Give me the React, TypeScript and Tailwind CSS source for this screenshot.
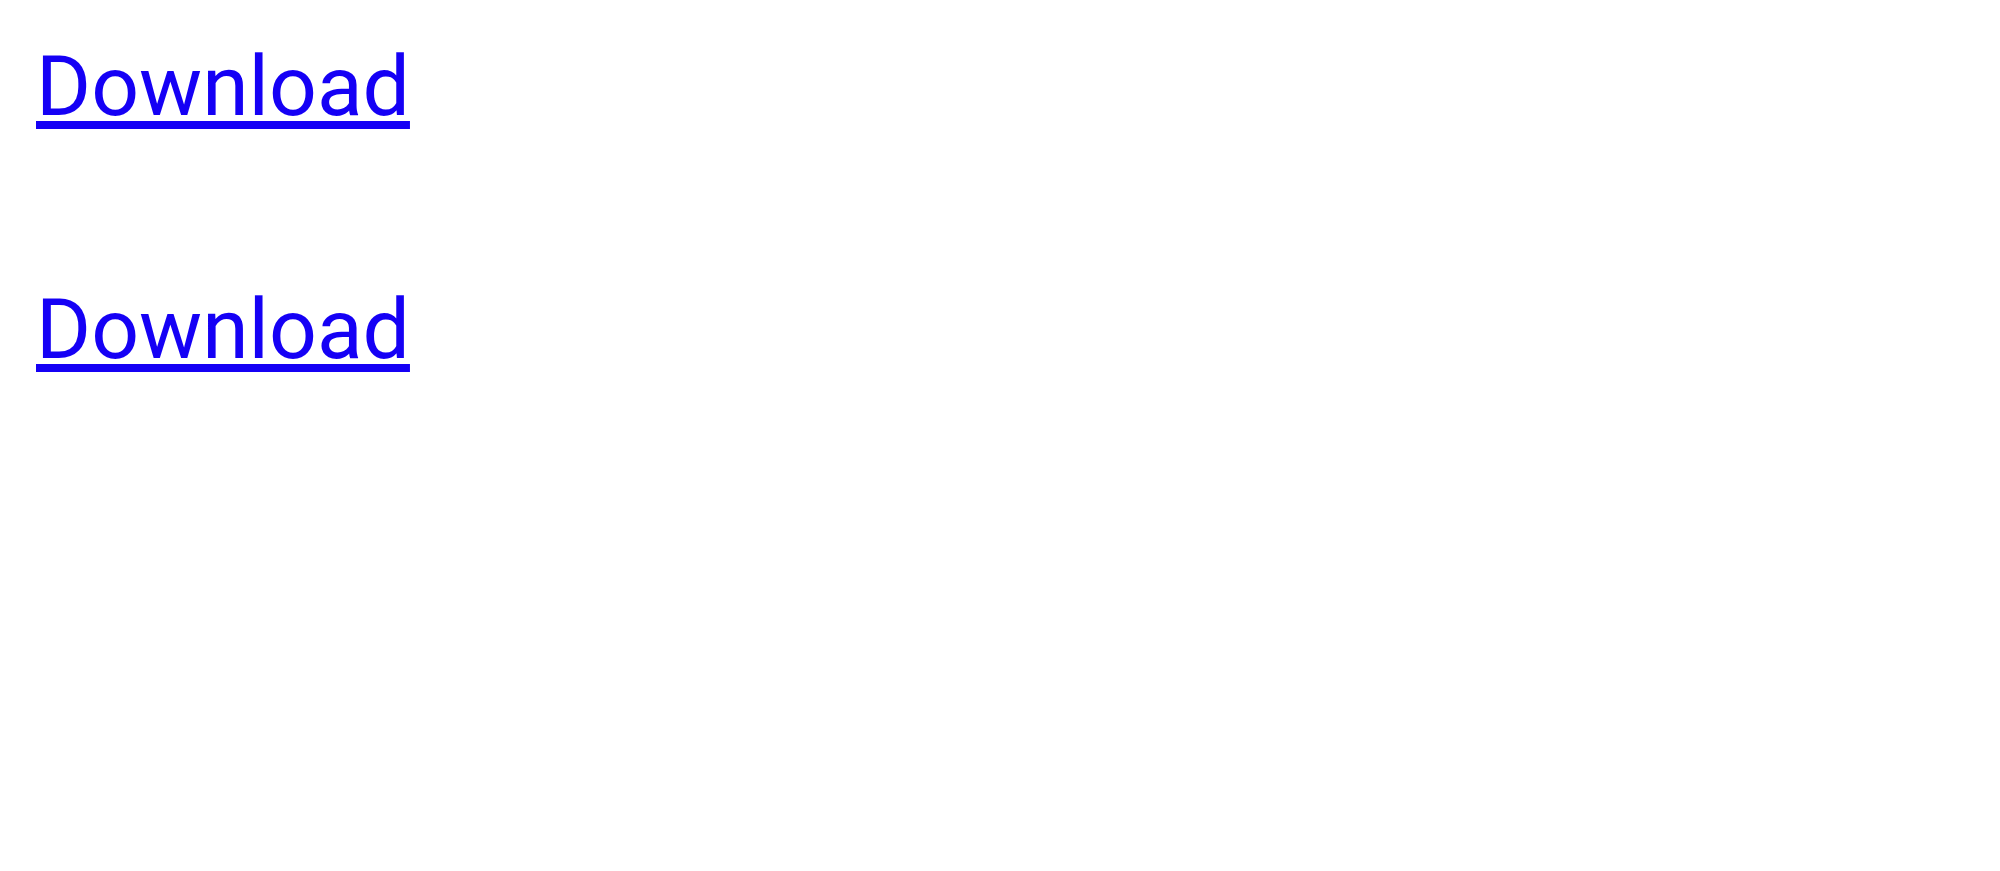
const links = [
    { id: 'first', label: 'Download' },
    { id: 'second', label: 'Download' },
];

export default function App() {
    return (
        <main className="min-h-screen bg-white px-9 py-[37px]">
            <div className="flex flex-col items-start gap-36">
                {links.map((link) => (
                    <a
                        key={link.id}
                        href={`#${link.id}`}
                        className="font-['Roboto',sans-serif] text-[84px] leading-[99px] text-[#1500f5] underline decoration-8 underline-offset-6 [text-decoration-skip-ink:none]"
                    >
                        {link.label}
                    </a>
                ))}
            </div>
        </main>
    );
}
